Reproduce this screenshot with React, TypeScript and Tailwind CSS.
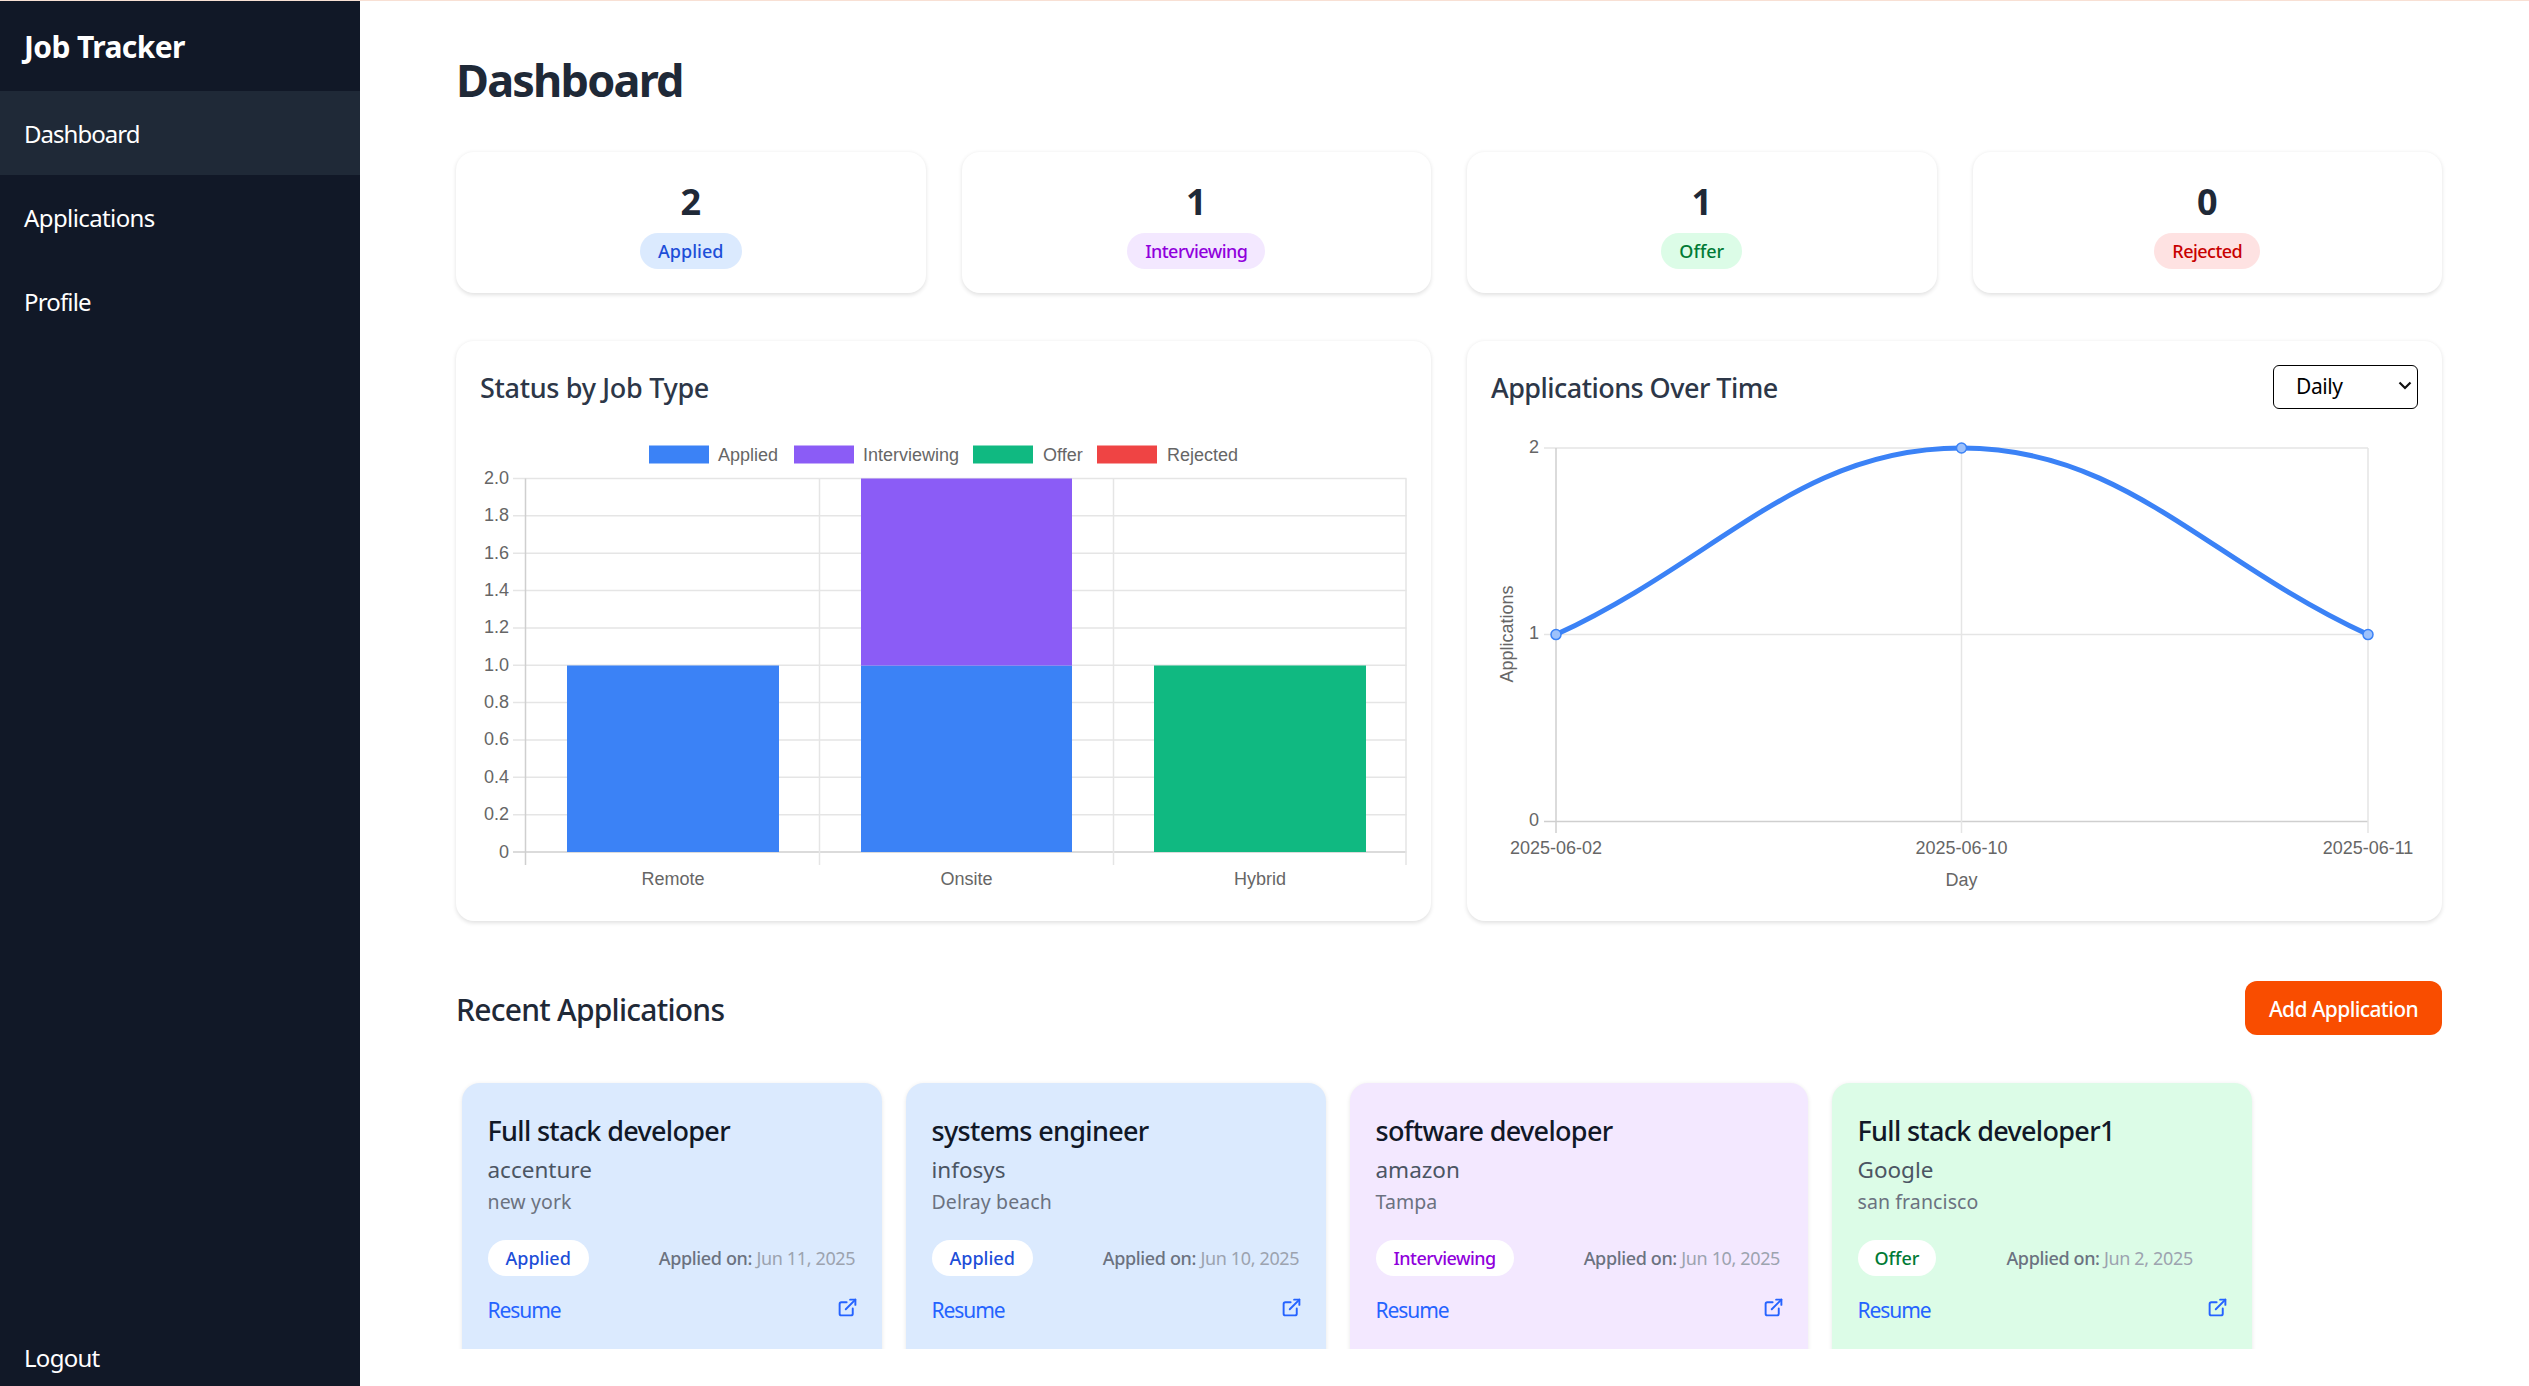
import { ExternalLink } from "lucide-react";

const stats = [
  { n: "2", label: "Applied", cls: "bg-[#dbeafe] text-[#1d4ed8] tracking-normal px-[18.5px]" },
  { n: "1", label: "Interviewing", cls: "bg-[#f3e8ff] text-[#9000dc] tracking-[-0.03em] px-[18px]" },
  { n: "1", label: "Offer", cls: "bg-[#dcfce7] text-[#007a35] tracking-normal px-[18px]" },
  { n: "0", label: "Rejected", cls: "bg-[#fee2e2] text-[#c80000] tracking-[-0.03em] px-[18px]" },
];

const apps = [
  { t: "Full stack developer", c: "accenture", l: "new york", s: "Applied", d: "Jun 11, 2025", bg: "bg-[#dbeafe]", w: "w-[420px]", sc: "text-[#1d4ed8] tracking-normal px-[18px]" },
  { t: "systems engineer", c: "infosys", l: "Delray beach", s: "Applied", d: "Jun 10, 2025", bg: "bg-[#dbeafe]", w: "w-[420px]", sc: "text-[#1d4ed8] tracking-normal px-[18px]" },
  { t: "software developer", c: "amazon", l: "Tampa", s: "Interviewing", d: "Jun 10, 2025", bg: "bg-[#f3e8ff]", w: "w-[458px]", sc: "text-[#9000dc] tracking-[-0.03em] px-[18px]" },
  { t: "Full stack developer1", c: "Google", l: "san francisco", s: "Offer", d: "Jun 2, 2025", bg: "bg-[#dcfce7]", w: "w-[420px]", sc: "text-[#007a35] tracking-normal px-[17px]" },
];

const cardCls = "bg-white rounded-[18px] shadow-[0_1.5px_4.5px_rgba(0,0,0,0.12)]";
const chartFont = { fontFamily: '"Liberation Sans", Arial, sans-serif', fontSize: 18, fill: "#666", letterSpacing: 0 };
const grid = "#e5e5e5";

function BarChart() {
  const top = 478.5;
  const bottom = 852;
  const labels = ["2.0", "1.8", "1.6", "1.4", "1.2", "1.0", "0.8", "0.6", "0.4", "0.2", "0"];
  const legend = [
    { x: 649, tx: 718, c: "#3b82f6", t: "Applied" },
    { x: 794, tx: 863, c: "#8b5cf6", t: "Interviewing" },
    { x: 973, tx: 1043, c: "#10b981", t: "Offer" },
    { x: 1097, tx: 1167, c: "#ef4444", t: "Rejected" },
  ];
  return (
    <svg viewBox="456 425 974 480" width="974" height="480" className="block">
      {legend.map((l) => (
        <g key={l.t}>
          <rect x={l.x} y={445.5} width={60} height={18} fill={l.c} />
          <text x={l.tx} y={460.5} style={chartFont}>{l.t}</text>
        </g>
      ))}
      {labels.map((t, i) => {
        const y = top + (i * (bottom - top)) / 10;
        return (
          <g key={t}>
            <line x1={513} x2={1406.5} y1={y} y2={y} stroke={i === 10 ? "#cfcfcf" : grid} strokeWidth={1.5} />
            <text x={509} y={y + 5.5} textAnchor="end" style={chartFont}>{t}</text>
          </g>
        );
      })}
      {[525.5, 819.5, 1113.5, 1406].map((x, i) => (
        <line key={x} x1={x} x2={x} y1={top} y2={865} stroke={i === 0 ? "#cfcfcf" : grid} strokeWidth={1.5} />
      ))}
      <rect x={567} y={665.5} width={212} height={186.5} fill="#3b82f6" />
      <rect x={861} y={665.5} width={211} height={186.5} fill="#3b82f6" />
      <rect x={861} y={478.5} width={211} height={187} fill="#8b5cf6" />
      <rect x={1154} y={665.5} width={212} height={186.5} fill="#10b981" />
      <text x={673} y={884.5} textAnchor="middle" style={chartFont}>Remote</text>
      <text x={966.5} y={884.5} textAnchor="middle" style={chartFont}>Onsite</text>
      <text x={1260} y={884.5} textAnchor="middle" style={chartFont}>Hybrid</text>
    </svg>
  );
}

function LineChart() {
  const ys = [448, 634.6, 821.4];
  const xs = [1556, 1961.5, 2368];
  return (
    <svg viewBox="1467 425 975 480" width="975" height="480" className="block">
      {ys.map((y, i) => (
        <g key={y}>
          <line x1={1544} x2={2368} y1={y} y2={y} stroke={i === 2 ? "#cfcfcf" : grid} strokeWidth={1.5} />
          <text x={1539} y={y + 4.5} textAnchor="end" style={chartFont}>{["2", "1", "0"][i]}</text>
        </g>
      ))}
      {xs.map((x, i) => (
        <line key={x} x1={x} x2={x} y1={448} y2={833} stroke={i === 0 ? "#cfcfcf" : grid} strokeWidth={1.5} />
      ))}
      <path d="M1556 634.6 C1718 560 1799 448 1961.5 448 C2124 448 2206 560 2368 634.6" fill="none" stroke="#3b82f6" strokeWidth={5} />
      {[[1556, 634.6], [1961.5, 448], [2368, 634.6]].map(([x, y]) => (
        <circle key={x} cx={x} cy={y} r={5} fill="#9dc1fb" stroke="#3b82f6" strokeWidth={1.5} />
      ))}
      {["2025-06-02", "2025-06-10", "2025-06-11"].map((t, i) => (
        <text key={t} x={xs[i]} y={854} textAnchor="middle" style={chartFont}>{t}</text>
      ))}
      <text x={1961.5} y={886} textAnchor="middle" style={chartFont}>Day</text>
      <text transform="translate(1513 634) rotate(-90)" textAnchor="middle" style={chartFont}>Applications</text>
    </svg>
  );
}

export default function App() {
  return (
    <div className="h-[1386px] overflow-hidden flex flex-col border-t border-[#f8e0d4] bg-white tracking-[-0.02em] font-['Noto_Sans',sans-serif]">
      <div className="flex flex-1 min-h-0">
        <aside className="w-[360px] shrink-0 bg-[#111827] text-white flex flex-col">
          <div className="h-[90px] flex items-center pl-6 text-[30px] font-bold tracking-[-0.02em]">Job Tracker</div>
          <div className="h-[84px] flex items-center pl-6 pt-[2px] text-[24px] tracking-[-0.04em] bg-[#1f2937]">Dashboard</div>
          <div className="h-[84px] flex items-center pl-6 pt-[2px] text-[24px] tracking-[-0.025em]">Applications</div>
          <div className="h-[84px] flex items-center pl-6 pt-[2px] text-[24px] tracking-[-0.035em]">Profile</div>
          <div className="mt-auto pl-6 pb-[10px] text-[24px] leading-9 tracking-[-0.03em]">Logout</div>
        </aside>
        <main className="flex-1 min-w-0 pl-24 pr-[87px]">
          <h1 className="h-[151px] pt-[50px] text-[45px] leading-[58px] font-bold text-[#1f2937] tracking-[-0.04em]">Dashboard</h1>
          <div className="grid grid-cols-4 gap-9">
            {stats.map((s) => (
              <div key={s.label} className={`${cardCls} h-[141px] flex flex-col items-center pt-[26px]`}>
                <div className="text-[36px] leading-[48px] font-bold text-[#1f2937]">{s.n}</div>
                <span className={`mt-[7px] h-9 rounded-full flex items-center text-[18px] font-medium ${s.cls}`}>{s.label}</span>
              </div>
            ))}
          </div>
          <div className="grid grid-cols-2 gap-9 mt-12">
            <div className={`${cardCls} h-[580px] overflow-hidden`}>
              <div className="h-[84px] pl-6 flex items-center pt-[10px] text-[27px] font-medium text-[#2d3748]">Status by Job Type</div>
              <BarChart />
            </div>
            <div className={`${cardCls} h-[580px] overflow-hidden`}>
              <div className="h-[84px] px-6 flex items-center justify-between pt-[10px] text-[27px] font-medium text-[#2d3748] tracking-[-0.02em]">
                <span>Applications Over Time</span>
                <div className="relative mb-[2px]">
                  <select className="block w-[145px] h-[44px] pl-[22px] appearance-none bg-white border-[1.5px] border-black rounded-[6px] text-[21px] font-normal text-black tracking-[-0.02em]">
                    <option>Daily</option>
                    <option>Weekly</option>
                    <option>Monthly</option>
                  </select>
                  <svg viewBox="0 0 14 9" width="14" height="9" className="absolute right-[6px] top-[16px] pointer-events-none">
                    <path d="M1.5 1.5 L7 7 L12.5 1.5" fill="none" stroke="#111" strokeWidth="2.2" />
                  </svg>
                </div>
              </div>
              <LineChart />
            </div>
          </div>
          <div className="mt-[60px] h-[54px] flex items-center justify-between">
            <h2 className="text-[30px] font-medium text-[#1f2937] pt-[2px] tracking-[-0.025em]">Recent Applications</h2>
            <button className="w-[197px] h-[54px] pt-[4px] rounded-[12px] bg-[#f94d00] text-white text-[21px] font-medium tracking-[-0.03em]">Add Application</button>
          </div>
          <div className="mt-[42px] h-[272px] pt-[6px] pl-[6px] flex gap-6 overflow-hidden">
            {apps.map((a) => (
              <div key={a.t} className={`${a.bg} ${a.w} shrink-0 h-[300px] rounded-[18px] shadow-[0_1px_4px_rgba(0,0,0,0.1)] px-[25.5px] pt-[30px]`}>
                <div className="text-[27px] leading-9 font-medium text-[#111827] tracking-[-0.025em]">{a.t}</div>
                <div className="mt-[3px] text-[22.5px] leading-9 text-[#4b5563] tracking-normal">{a.c}</div>
                <div className="text-[19.5px] leading-[30px] text-[#6b7280] -mt-[1px] tracking-[0.005em]">{a.l}</div>
                <div className="mt-[23px] h-9 flex items-center gap-[70px]">
                  <span className={`h-9 rounded-full bg-white flex items-center text-[18px] font-medium ${a.sc}`}>{a.s}</span>
                  <span className="text-[18px] text-[#9ca3af] tracking-[-0.02em]"><span className="font-medium text-[#6b7280]">Applied on:</span> {a.d}</span>
                </div>
                <div className="mt-[18px] flex items-center justify-between text-[#2563ff]">
                  <span className="text-[21px] leading-8 tracking-[-0.05em]">Resume</span>
                  <ExternalLink size={21} strokeWidth={2.2} className="-mt-[6px] -mr-[1px]" />
                </div>
              </div>
            ))}
          </div>
        </main>
      </div>
    </div>
  );
}
